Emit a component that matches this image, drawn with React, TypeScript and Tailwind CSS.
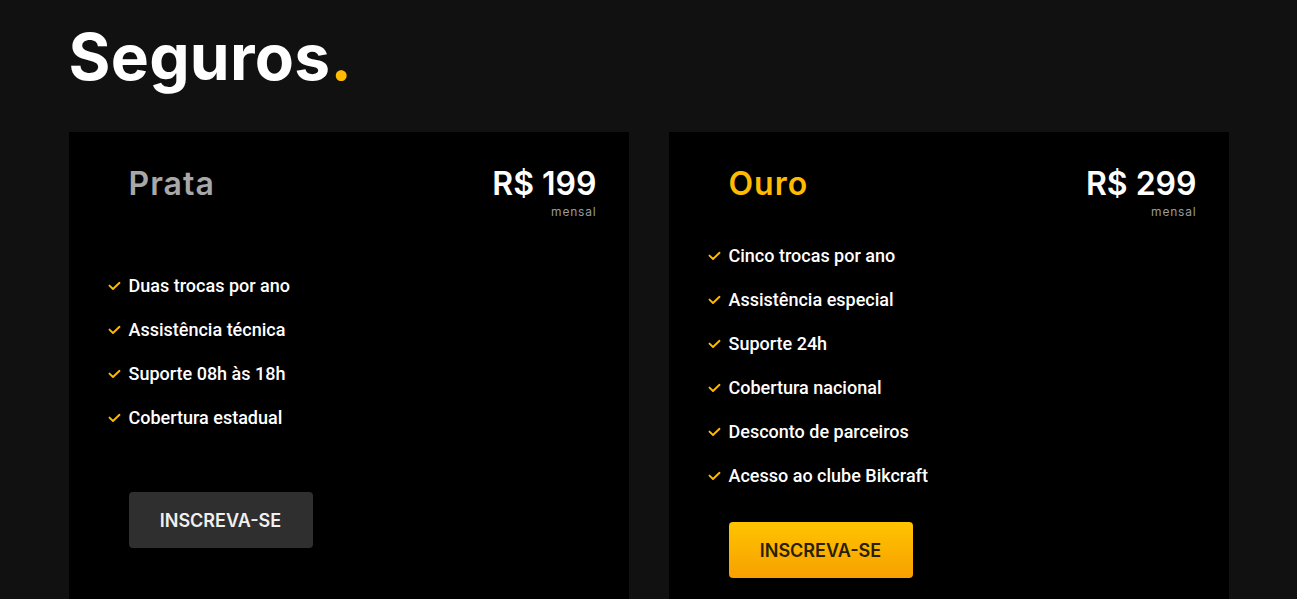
import React from 'react';

type Plan = {
  name: string;
  price: string;
  nameColor: string;
  items: string[];
  listTop: string;
  buttonTop: string;
  buttonClass: string;
};

const plans: Plan[] = [
  {
    name: 'Prata',
    price: 'R$ 199',
    nameColor: 'text-[#a8a8a8]',
    items: ['Duas trocas por ano', 'Assistência técnica', 'Suporte 08h às 18h', 'Cobertura estadual'],
    listTop: 'mt-[54px]',
    buttonTop: 'mt-[62px]',
    buttonClass: 'bg-[#2f2f2f] text-[#f0f0f0]',
  },
  {
    name: 'Ouro',
    price: 'R$ 299',
    nameColor: 'text-[#ffbb00]',
    items: [
      'Cinco trocas por ano',
      'Assistência especial',
      'Suporte 24h',
      'Cobertura nacional',
      'Desconto de parceiros',
      'Acesso ao clube Bikcraft',
    ],
    listTop: 'mt-[24px]',
    buttonTop: 'mt-[34px]',
    buttonClass: 'bg-gradient-to-b from-[#ffc400] to-[#f7a000] text-[#2a1f00]',
  },
];

const Check = () => (
  <svg width="13" height="10" viewBox="0 0 13 10" fill="none" className="shrink-0">
    <path d="M1.5 4.6 L5 8 L11.5 1.8" stroke="#ffbb00" strokeWidth="1.9" strokeLinecap="round" strokeLinejoin="round" />
  </svg>
);

const PlanCard = ({ plan }: { plan: Plan }) => (
  <div className="bg-black pt-8 pl-[60px] pr-8 pb-10 flex flex-col">
    <div className="flex justify-between items-start">
      <h2 className={`${plan.nameColor} text-[32px] leading-[40px] font-semibold tracking-[1px]`}>{plan.name}</h2>
      <div className="flex flex-col items-end">
        <span className="text-white text-[32px] leading-[40px] font-semibold">{plan.price}</span>
        <span className="text-[#9a9a9a] text-[12px] leading-[16px] tracking-[0.8px]">mensal</span>
      </div>
    </div>
    <ul className={`${plan.listTop} flex flex-col gap-5 font-['Roboto',sans-serif]`}>
      {plan.items.map((item) => (
        <li key={item} className="flex items-center gap-2 -ml-[21px] text-white text-[18px] leading-6 font-medium">
          <Check />
          {item}
        </li>
      ))}
    </ul>
    <button
      className={`${plan.buttonTop} ${plan.buttonClass} w-[184px] h-[56px] rounded text-[18px] font-semibold uppercase`}
    >
      Inscreva-se
    </button>
  </div>
);

export default function App() {
  return (
    <div className="min-h-screen bg-[#111111] font-['Inter',sans-serif]">
      <div className="max-w-[1160px] mx-auto pt-[25px]">
        <h1 className="text-white text-[64px] leading-[64px] font-bold tracking-[0.3px]">
          Seguros<span className="text-[#ffbb00]">.</span>
        </h1>
        <div className="mt-[43px] grid grid-cols-2 gap-10">
          {plans.map((plan) => (
            <PlanCard key={plan.name} plan={plan} />
          ))}
        </div>
      </div>
    </div>
  );
}
